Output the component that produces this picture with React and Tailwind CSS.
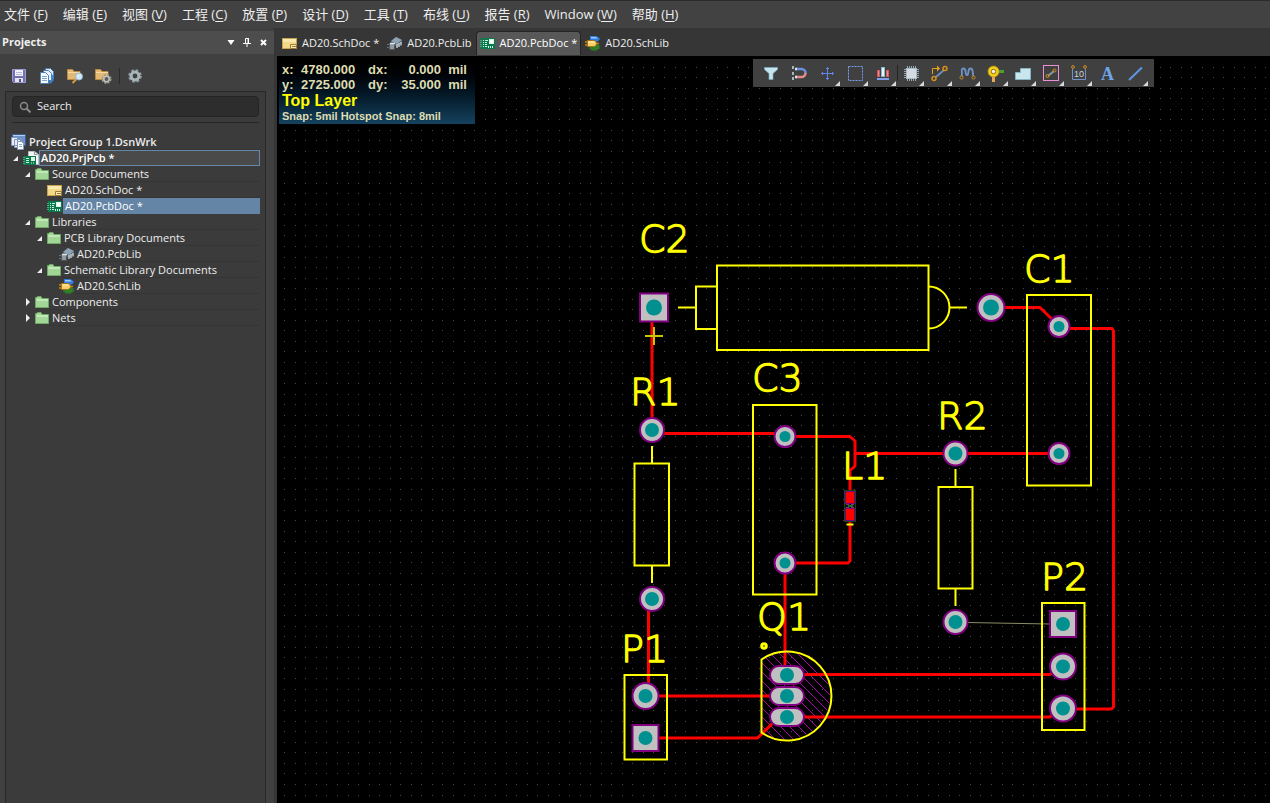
import React, { useState } from 'react';

const MENU = [
  { label: '文件', key: 'F' },
  { label: '编辑', key: 'E' },
  { label: '视图', key: 'V' },
  { label: '工程', key: 'C' },
  { label: '放置', key: 'P' },
  { label: '设计', key: 'D' },
  { label: '工具', key: 'T' },
  { label: '布线', key: 'U' },
  { label: '报告', key: 'R' },
  { label: 'Window', key: 'W' },
  { label: '帮助', key: 'H' }
];

/* ==========================================
   FILE TYPE ICONS
   ========================================== */
const SchDocIcon = () => (
  <svg width="16" height="13" viewBox="0 0 16 13" className="shrink-0">
    <rect x="0.500" y="1.500" width="14" height="10" fill="#f3d987" stroke="#c9a44e" />
    <path d="M1 2h13v3H1z" fill="#fae9ae" />
    <path d="M8.500 7.500h6v4h-6z" fill="#fbe9b0" stroke="#9a7a35" />
    <path d="M10 9.500h4" stroke="#9a7a35" />
  </svg>
);

const PcbDocIcon = () => (
  <svg width="16" height="13" viewBox="0 0 16 13" className="shrink-0" shapeRendering="crispEdges">
    <rect x="1" y="1" width="14" height="11" fill="#0a7a4c" />
    <path d="M0 3h2v1H0zM0 5h2v1H0zM0 7h2v1H0zM0 9h2v1H0z" fill="#3fae7e" />
    <path d="M3 3h1v1H3zM3 5h1v1H3zM3 7h1v1H3zM3 9h1v1H3zM5 3h3v1H5zM5 5h2v1H5zM5 7h2v1H5zM5 9h2v1H5z" fill="#c9f3de" />
    <path d="M9 2h5v5H9z" fill="#d9f5e6" />
    <path d="M10 3h3v3h-3z" fill="#fff" />
    <path d="M8 9h1v2H8zM10 9h1v2h-1zM12 9h1v2h-1z" fill="#d9f5e6" />
  </svg>
);

const PcbLibIcon = () => (
  <svg width="16" height="15" viewBox="0 0 16 15" className="shrink-0">
    <path d="M4 5L9 1l6 3v3l-5 4-6-3z" fill="#4f606e" />
    <path d="M4 5L9 1l6 3-5 4z" fill="#8fa3b3" />
    <path d="M10 12V8m2 3V7m2 2.500V6" stroke="#e5ebf0" strokeWidth="1.200" />
    <path d="M0 8.500h3M0 11.500h3" stroke="#69737b" />
    <rect x="2.500" y="7.500" width="5" height="6" fill="#9199a0" stroke="#4f565c" />
    <path d="M3 7.500h5" stroke="#dfe5ea" strokeWidth="1.500" />
  </svg>
);

const SchLibIcon = () => (
  <svg width="16" height="16" viewBox="0 0 16 16" className="shrink-0">
    <path d="M5 1h5c3 0 4 2 5 3-1 1-2 3-5 3H5z" fill="#2f7be0" />
    <path d="M6 2h5l2 1.500H6z" fill="#9ccbff" />
    <path d="M6 10h7v4H6zM7 14v2m2-2v2m2-2v2m2-5h2m-2 2h2M4 13h2" fill="#2f7d24" stroke="#2f8a20" />
    <path d="M0 7h3M0 10h3m8-1.500h3" stroke="#c48a13" strokeWidth="1.300" />
    <path d="M2.500 5.500h6c2 0 3 1.500 3 3s-1 3-3 3h-6z" fill="#f8cf6b" stroke="#a87410" />
    <path d="M3.500 6.500h5l1.500 1h-6.500z" fill="#fff1c2" />
  </svg>
);

const FolderIcon = () => (
  <svg width="14" height="12" viewBox="0 0 14 12" className="shrink-0">
    <path d="M0.500 11.500v-10h1l1-1h3.500l1 2h6.500v9z" fill="#a2d697" stroke="#6fa866" />
    <path d="M1.500 4h11.500" stroke="#c9efc0" strokeWidth="1.500" />
  </svg>
);

const ProjectIcon = () => (
  <svg width="16" height="15" viewBox="0 0 16 15" className="shrink-0">
    <path d="M5.500 0.500h6l4 3v10h-10z" fill="#f3f5f7" stroke="#b9c0c6" />
    <path d="M11.500 0.500v3h3" fill="none" stroke="#8c949b" />
    <rect x="1" y="5" width="12" height="9" fill="#0a7a4c" />
    <path d="M0 6.500h2M0 8.500h2M0 10.500h2M0 12.500h2" stroke="#3fae7e" />
    <path d="M3 7.500h3M3 9.500h3M3 11.500h3M8 12h1m1 0h1" stroke="#c9f3de" />
    <path d="M8 6h4v4H8z" fill="#d9f5e6" />
  </svg>
);

const GroupIcon = () => (
  <svg width="16" height="16" viewBox="0 0 16 16" className="shrink-0">
    <rect x="1.500" y="0.500" width="13" height="11" fill="#6f93c8" stroke="#3c5c92" />
    <path d="M2 1.500h12" stroke="#b6cff2" />
    <path d="M0.500 3.500h6v8h-6zM3.500 5.500h6v8h-6z" fill="#e7eef9" stroke="#8398bb" />
    <path d="M6.500 7.500h4l2 2v6h-6z" fill="#fff" stroke="#8398bb" />
    <path d="M8 10.500h3M8 12.500h3" stroke="#93a9cc" />
  </svg>
);

/* ==========================================
   PANEL ACTION ICONS
   ========================================== */
const SaveIcon = () => (
  <svg width="16" height="16" viewBox="0 0 16 16">
    <path d="M1.500 1.500h13v13h-12l-1-1z" fill="#7272b0" stroke="#9c9cd2" />
    <rect x="4" y="2" width="8" height="6" fill="#f2f2fa" />
    <path d="M5 4.500h6M5 6.500h6" stroke="#b9b9d2" />
    <rect x="4" y="10" width="8" height="4" fill="#e4e4f0" />
    <rect x="8" y="11" width="2" height="3" fill="#55558c" />
  </svg>
);

const CompileIcon = () => (
  <svg width="16" height="16" viewBox="0 0 16 16">
    <path d="M6.500 0.500h5l3 3v7h-8z" fill="#d9e9f7" stroke="#4d80b3" />
    <path d="M4.500 2.500h5l3 3v7h-8z" fill="#e6f1fb" stroke="#4d80b3" />
    <path d="M1.500 4.500h5l3 3v8h-8z" fill="#f6fbff" stroke="#4d80b3" />
    <path d="M3 8.500h5M3 10.500h5M3 12.500h5" stroke="#7ba6cf" />
    <path d="M13.500 7v5l-3 3" stroke="#3f86d6" strokeWidth="2" fill="none" />
  </svg>
);

const FolderSearchIcon = () => (
  <svg width="17" height="16" viewBox="0 0 17 16">
    <path d="M0.500 11.500v-10h5l1.500 2h6v8z" fill="#e3b873" stroke="#b98b47" />
    <path d="M1 4.500h12" stroke="#f6d9a4" />
    <path d="M9.500 11l-4 4" stroke="#d39a3c" strokeWidth="2" />
    <circle cx="12" cy="8.500" r="3.500" fill="#d4eaf6" stroke="#8fb4c9" />
  </svg>
);

const FolderGearIcon = () => (
  <svg width="17" height="16" viewBox="0 0 17 16">
    <path d="M0.500 11.500v-10h5l1.500 2h6v8z" fill="#e3b873" stroke="#b98b47" />
    <path d="M1 4.500h12" stroke="#f6d9a4" />
    <circle cx="11.500" cy="11" r="4" fill="none" stroke="#9a9a94" strokeWidth="2" strokeDasharray="2 1.150" />
    <circle cx="11.500" cy="11" r="2.700" fill="#5c5c58" stroke="#c3c3bb" strokeWidth="1.500" />
  </svg>
);

const GearIcon = () => (
  <svg width="16" height="16" viewBox="0 0 16 16">
    <circle cx="8" cy="8" r="5.600" fill="none" stroke="#8d9a9f" strokeWidth="2.400" strokeDasharray="2.600 1.800" />
    <circle cx="8" cy="8" r="3.900" fill="none" stroke="#a7b4b9" strokeWidth="3" />
  </svg>
);

/* ==========================================
   PLACEMENT TOOLBAR ICONS
   ========================================== */
const TOOLS = [
  {
    name: 'Filter',
    art: <path d="M1.500 2.500h13v2l-4.500 4v6H6v-6l-4.500-4z" fill="#c4e4ee" stroke="#7fa9bb" strokeWidth="0.700" />
  },
  {
    name: 'Snapping',
    art: (
      <>
        <path d="M1 2.500h2M1 8.500h2M1 13.500h2" stroke="#a3b8b8" strokeWidth="3" />
        <path d="M5 4h5.500a4 4 0 0 1 4 4" fill="none" stroke="#6c8fe0" strokeWidth="2.600" />
        <path d="M14.500 8a4 4 0 0 1-4 4H5" fill="none" stroke="#e58a8a" strokeWidth="2.600" />
        <path d="M4 4h2M4 12h2" stroke="#d9e4f2" strokeWidth="2.600" />
      </>
    )
  },
  {
    name: 'Move',
    menu: true,
    art: <path d="M8.500 2v13M2 8.500h13M7 3.500h3M7 13.500h3M3.500 7v3M13.500 7v3" stroke="#5f86e6" fill="none" />
  },
  {
    name: 'Select area',
    menu: true,
    art: <rect x="1.500" y="1.500" width="14" height="14" fill="none" stroke="#7a9cf0" strokeDasharray="2 1" />
  },
  {
    name: 'Align',
    menu: true,
    art: (
      <>
        <rect x="2.500" y="5.500" width="2" height="6" fill="#ec8d8d" stroke="#d65555" />
        <rect x="11.500" y="5.500" width="2" height="6" fill="#ec8d8d" stroke="#d65555" />
        <rect x="6.500" y="2.500" width="3" height="9" fill="#e4f5fb" stroke="#89b8cd" />
        <path d="M2 14h12" stroke="#7fa0ef" strokeWidth="2" />
      </>
    )
  },
  {
    name: 'Component',
    menu: true,
    divided: true,
    art: (
      <>
        <path d="M4.500 1v15M6.500 1v15M8.500 1v15M10.500 1v15M12.500 1v15M1 4.500h15M1 6.500h15M1 8.500h15M1 10.500h15M1 12.500h15" stroke="#8fa9b5" />
        <rect x="3.500" y="3.500" width="10" height="10" fill="#d5dbe0" stroke="#a9bcc6" />
      </>
    )
  },
  {
    name: 'Route',
    menu: true,
    art: (
      <>
        <path d="M5 12L13 5" stroke="#6f8bb4" strokeWidth="2" />
        <path d="M1.500 9V3.500H7" stroke="#e8a21a" fill="none" />
        <path d="M6 0.500l3 3-3 3z" fill="#e8a21a" />
        <circle cx="3" cy="13.500" r="2" fill="none" stroke="#d3901a" strokeWidth="1.500" />
        <circle cx="14" cy="3.500" r="2" fill="none" stroke="#d3901a" strokeWidth="1.500" />
      </>
    )
  },
  {
    name: 'Tune length',
    menu: true,
    art: (
      <>
        <path d="M2.500 12C4 8 1 3.500 4.500 3.500S5.500 10 8 10s0-6.500 3.500-6.500S13 8 14.500 12" fill="none" stroke="#6f93c9" strokeWidth="1.800" />
        <circle cx="2.500" cy="12.500" r="1.600" fill="#444" stroke="#c98a1e" />
        <circle cx="14.500" cy="12.500" r="1.600" fill="#444" stroke="#c98a1e" />
      </>
    )
  },
  {
    name: 'Via',
    menu: true,
    art: (
      <>
        <path d="M11 6.500h6" stroke="#4f9e35" strokeWidth="3" />
        <path d="M6.500 11v6" stroke="#eaa957" strokeWidth="3" />
        <circle cx="6.500" cy="6.500" r="5.500" fill="#f2cd1d" stroke="#b48c0a" strokeWidth="0.700" />
        <circle cx="6.500" cy="6.500" r="2.200" fill="#f8f5e6" stroke="#8f6e0b" />
      </>
    )
  },
  {
    name: 'Polygon',
    menu: true,
    art: <path d="M0.500 14.500v-7h5v-4h10v11z" fill="#c9e6ee" stroke="#84b3c5" />
  },
  {
    name: 'Keepout',
    menu: true,
    art: (
      <>
        <rect x="0.500" y="0.500" width="15" height="15" fill="none" stroke="#ee8ed8" />
        <path d="M5 11l6-5" stroke="#7f99a8" strokeWidth="2" />
        <circle cx="4.500" cy="11" r="1.500" fill="none" stroke="#d3901a" />
        <circle cx="11.500" cy="5.500" r="1.500" fill="none" stroke="#d3901a" />
      </>
    )
  },
  {
    name: 'Dimension',
    menu: true,
    art: (
      <>
        <path d="M1.500 4v10.500h13V4" fill="none" stroke="#6f93c9" />
        <circle cx="2" cy="2" r="1.400" fill="none" stroke="#d3901a" />
        <circle cx="14" cy="2" r="1.400" fill="none" stroke="#d3901a" />
        <text x="3" y="12" fill="#c8d2d6" fontSize="9" fontFamily="Liberation Sans, sans-serif">10</text>
      </>
    )
  },
  {
    name: 'String',
    art: (
      <text x="2" y="15" fill="#6fa5e8" fontSize="18" fontWeight="bold" fontFamily="Liberation Serif, serif">A</text>
    )
  },
  {
    name: 'Line',
    menu: true,
    art: <path d="M2 15L15 2.500" stroke="#5d97e3" strokeWidth="2" />
  }
];

/* ==========================================
   BOARD DATA
   ========================================== */
const TRACKS = [
  'M652 320V430',
  'M652 433.500H785',
  'M785 436.500H850L855 441V466L850 470.500V561L848 563H785',
  'M855 453.500H1059',
  'M785 563V675',
  'M991 307.500H1040L1059 326',
  'M1059 328.500H1112L1113.500 331V707L1111.500 709H1063',
  'M648.500 599V690',
  'M645 696H787',
  'M645 738H757.500L779 717',
  'M787 674.500H1050L1058 667',
  'M787 717H1050L1058 709'
];

const OUTLINES = [
  'M717 265.500H928.500V350H717Z',
  'M717 286.500H696V329H717M678 307.500H696',
  'M928.500 286.500A21 21 0 0 1 928.500 328.500M950 307.500H967',
  'M1027 295H1091V485.500H1027Z',
  'M753 405H816.500V594.500H753Z',
  'M634.500 463.500H669V565.500H634.500ZM652 446V463M652 566V583',
  'M938.500 487H972.500V588.500H938.500ZM955.500 469V487M955.500 588V606',
  'M624.500 675H667V759.500H624.500Z',
  'M1042 603H1084.500V730H1042Z',
  'M846.500 524.500H853.500'
];

const ROUND_PADS = [
  { x: 991, y: 307.5, r: 13.5, hole: 8 },
  { x: 1059, y: 326.5, r: 10.5, hole: 5.5 },
  { x: 1059, y: 453.5, r: 10.5, hole: 5.5 },
  { x: 785, y: 436.5, r: 10.5, hole: 5.5 },
  { x: 785, y: 563, r: 10.5, hole: 5.5 },
  { x: 652, y: 430, r: 12, hole: 7 },
  { x: 652, y: 599, r: 12, hole: 7 },
  { x: 955.5, y: 453.5, r: 12, hole: 7 },
  { x: 955.5, y: 622, r: 12, hole: 7 },
  { x: 645.5, y: 696, r: 13, hole: 7 },
  { x: 1063, y: 666.5, r: 13, hole: 7 },
  { x: 1063, y: 708.5, r: 13, hole: 7 }
];

const SQUARE_PADS = [
  { x: 654, y: 307.5, size: 28, hole: 8 },
  { x: 645.5, y: 738, size: 26, hole: 7 },
  { x: 1063, y: 624, size: 26, hole: 7 }
];

const DESIGNATORS = [
  { text: 'C2', x: 639, y: 252 },
  { text: 'C1', x: 1024, y: 282 },
  { text: 'C3', x: 752, y: 391 },
  { text: 'R1', x: 630, y: 405 },
  { text: 'R2', x: 937, y: 429 },
  { text: 'L1', x: 842, y: 479 },
  { text: 'Q1', x: 757, y: 630 },
  { text: 'P1', x: 621, y: 662 },
  { text: 'P2', x: 1041, y: 590 }
];

// 25 mil grid, one pixel per dot
const GRID_STEP = 10.55;
const gridPath = () => {
  let d = '';
  for (let x = 284.7; x < 2600; x += GRID_STEP) {
    for (let y = 67.1; y < 1500; y += GRID_STEP) {
      d += `M${Math.floor(x)} ${Math.floor(y)}h1v1h-1z`;
    }
  }
  return d;
};
const GRID = gridPath();

const Board = () => (
  <svg className="absolute inset-0 h-full w-full" role="img" aria-label="PCB layout">
    <defs>
      <pattern id="hatch" width="9" height="9" patternUnits="userSpaceOnUse">
        <path d="M-1 -1L10 10M-1 8L1 10M8 -1L10 1" stroke="#d800d8" strokeWidth="0.800" />
      </pattern>
    </defs>
    <g transform="translate(-277 -56)" fill="none">
      <path d={GRID} fill="#484848" shapeRendering="crispEdges" />

      <path d="M761.500 659.500A44 44 0 1 1 761.500 732.500Z" fill="url(#hatch)" />

      <g stroke="#ff0000" strokeWidth="3" strokeLinejoin="round">
        {TRACKS.map((d) => <path key={d} d={d} />)}
      </g>
      <path d="M967 622.500L1050 624" stroke="#8c8c66" />

      {/* Pads */}
      <g fill="#c0c0c0" stroke="#800080" strokeWidth="2">
        {ROUND_PADS.map((p) => <circle key={`${p.x}-${p.y}`} cx={p.x} cy={p.y} r={p.r} />)}
        {SQUARE_PADS.map((p) => (
          <rect key={`${p.x}-${p.y}`} x={p.x - p.size / 2} y={p.y - p.size / 2} width={p.size} height={p.size} />
        ))}
        {[675, 696, 717].map((y) => <rect key={y} x="770" y={y - 9} width="34" height="18" rx="9" />)}
      </g>
      <g fill="#009090">
        {[...ROUND_PADS, ...SQUARE_PADS].map((p) => <circle key={`${p.x}-${p.y}`} cx={p.x} cy={p.y} r={p.hole} />)}
        {[675, 696, 717].map((y) => <circle key={y} cx="787" cy={y} r="7" />)}
      </g>

      {/* L1 */}
      <rect x="844.500" y="490.500" width="11" height="31" fill="#111" stroke="#0f4a16" />
      <rect x="845.500" y="491.500" width="9" height="12" fill="#ff0000" stroke="#800080" />
      <rect x="845.500" y="508.500" width="9" height="12" fill="#ff0000" stroke="#800080" />
      <path d="M846 504.500h3m2 0h3M846 507.500h3m2 0h3" stroke="#803a70" />
      <path d="M848 506h5" stroke="#1e6e28" strokeWidth="2" />

      {/* Overlay */}
      <g stroke="#ffff00" strokeWidth="2">
        {OUTLINES.map((d) => <path key={d} d={d} />)}
        <path d="M761.500 659.500A44.500 44.500 0 1 1 761.500 732.500Z" />
        <circle cx="764" cy="646" r="2.300" strokeWidth="3" />
      </g>
      <path d="M645 336H663M654 327V345" stroke="#c8c800" strokeWidth="2" />
      <g
        fill="#ffff00"
        stroke="#ffff00"
        strokeWidth="1.300"
        strokeLinejoin="round"
        fontSize="38"
        fontWeight="200"
        fontFamily="DejaVu Sans Light, DejaVu Sans, sans-serif"
      >
        {DESIGNATORS.map((t) => <text key={t.text} x={t.x} y={t.y}>{t.text}</text>)}
      </g>
    </g>
  </svg>
);

/* ==========================================
   PROJECT TREE
   ========================================== */
const TREE = [
  { text: 'Project Group 1.DsnWrk', icon: GroupIcon, indent: 'pl-[11px]', bold: true },
  { text: 'AD20.PrjPcb *', icon: ProjectIcon, indent: 'pl-[11px]', open: true, bold: true, outlined: true },
  { text: 'Source Documents', icon: FolderIcon, indent: 'pl-[23px]', open: true },
  { text: 'AD20.SchDoc *', icon: SchDocIcon, indent: 'pl-[47px]' },
  { text: 'AD20.PcbDoc *', icon: PcbDocIcon, indent: 'pl-[47px]', selected: true },
  { text: 'Libraries', icon: FolderIcon, indent: 'pl-[23px]', open: true },
  { text: 'PCB Library Documents', icon: FolderIcon, indent: 'pl-[35px]', open: true },
  { text: 'AD20.PcbLib', icon: PcbLibIcon, indent: 'pl-[59px]' },
  { text: 'Schematic Library Documents', icon: FolderIcon, indent: 'pl-[35px]', open: true },
  { text: 'AD20.SchLib', icon: SchLibIcon, indent: 'pl-[59px]' },
  { text: 'Components', icon: FolderIcon, indent: 'pl-[23px]', open: false },
  { text: 'Nets', icon: FolderIcon, indent: 'pl-[23px]', open: false }
];

const Arrow = ({ open }) => (
  <svg width="12" height="8" viewBox="0 0 12 8" className="shrink-0">
    {open ? <path d="M7 2v5H2z" fill="#eee" /> : <path d="M3 0l4 4-4 4z" fill="#eee" />}
  </svg>
);

const TreeRow = ({ row }) => {
  const Icon = row.icon;
  let label = 'border-y border-t-transparent border-b-[#353535] pl-[2px]';
  if (row.icon === FolderIcon) label = 'border-y border-t-transparent border-b-[#353535] pl-[3px]';
  if (row.outlined) label = 'border border-[#6488a8] bg-[#4a4a4a] pl-px text-white';
  if (row.selected) label = 'bg-[#6485a5] pl-[2px] text-white';

  return (
    <li className={`flex h-4 items-center ${row.indent}`}>
      {row.open !== undefined && <Arrow open={row.open} />}
      <Icon />
      <button
        className={`flex h-4 min-w-0 flex-1 items-center whitespace-nowrap text-left ${row.bold ? 'font-semibold' : ''} ${label}`}
      >
        {row.text}
      </button>
    </li>
  );
};

const ProjectsPanel = () => {
  const [query, setQuery] = useState('');
  const actions = [
    { name: 'Save', icon: SaveIcon },
    { name: 'Compile', icon: CompileIcon },
    { name: 'Explore', icon: FolderSearchIcon },
    { name: 'Project options', icon: FolderGearIcon }
  ];

  return (
    <aside className="flex w-[274px] shrink-0 flex-col bg-[#404040]">
      <div className="mt-[3px] flex h-[23px] items-center bg-[#4d4d4d] pl-[2px] pr-[3px]">
        <h2 className="flex-1 font-bold">Projects</h2>
        <button aria-label="Panel menu" className="grid h-4 w-4 place-items-center">
          <svg width="8" height="5"><path d="M0.500 0h7L4 5z" fill="#fff" /></svg>
        </button>
        <button aria-label="Pin" className="grid h-4 w-4 place-items-center">
          <svg width="8" height="9" viewBox="0 0 8 9">
            <path d="M2.500 0.500h3v5h-3zM5 0v6M0 5.500h8M4 6v3" fill="none" stroke="#fff" />
          </svg>
        </button>
        <button aria-label="Close" className="grid h-4 w-4 place-items-center">
          <svg width="7" height="7"><path d="M1 1l5 5M6 1L1 6" stroke="#fff" strokeWidth="2" /></svg>
        </button>
      </div>

      <div className="flex h-[37px] items-center gap-3 pl-[11px] pt-[6px]">
        {actions.map(({ name, icon: Icon }) => (
          <button key={name} aria-label={name} className="w-4"><Icon /></button>
        ))}
        <div className="-ml-1 h-4 w-px bg-[#2a2a2a]" />
        <button aria-label="Settings" className="-ml-[5px] w-4"><GearIcon /></button>
      </div>

      <div className="ml-[5px] mr-2 flex-1 border-x border-t border-[#272727] bg-[#3b3b3b]">
        <div className="mx-[6px] border-b border-[#272727] pb-[5px] pt-1">
          <label className="flex h-[21px] items-center gap-[6px] rounded-sm border border-[#252525] bg-[#2d2d2d] pl-[6px]">
            <svg width="12" height="12" viewBox="0 0 12 12">
              <circle cx="5" cy="5" r="3.500" fill="none" stroke="#8a8a8a" strokeWidth="1.500" />
              <path d="M7.500 7.500l4 4" stroke="#8a8a8a" strokeWidth="2" />
            </svg>
            <input
              type="text"
              aria-label="Search"
              placeholder="Search"
              value={query}
              onChange={(e) => setQuery(e.target.value)}
              className="min-w-0 flex-1 bg-transparent outline-none placeholder:text-[#eee]"
            />
          </label>
        </div>
        <ul className="mr-[5px] mt-[11px] -ml-[6px]">
          {TREE.map((row) => <TreeRow key={row.text} row={row} />)}
        </ul>
      </div>
    </aside>
  );
};

/* ==========================================
   EDITOR
   ========================================== */
const TABS = [
  { text: 'AD20.SchDoc *', icon: SchDocIcon },
  { text: 'AD20.PcbLib', icon: PcbLibIcon },
  { text: 'AD20.PcbDoc *', icon: PcbDocIcon, active: true },
  { text: 'AD20.SchLib', icon: SchLibIcon }
];

const HeadsUp = () => (
  <div className="absolute left-[2px] top-0 h-[68px] w-[196px] whitespace-nowrap bg-gradient-to-b from-black to-[#15425f] pl-[3px] pt-[6px] font-['Liberation_Sans',sans-serif] font-bold text-[#dedcb0]">
    <div className="grid grid-cols-[19px_54px_40px_46px_26px] text-[13px] leading-[15px]">
      <span>x:</span>
      <span className="text-right">4780.000</span>
      <span className="pl-[13px]">dx:</span>
      <span className="text-right">0.000</span>
      <span className="text-right">mil</span>
      <span>y:</span>
      <span className="text-right">2725.000</span>
      <span className="pl-[13px]">dy:</span>
      <span className="text-right">35.000</span>
      <span className="text-right">mil</span>
    </div>
    <div className="text-[16px] leading-[17px] text-[#ffff00]">Top Layer</div>
    <div className="text-[11px] leading-[14px]">Snap: 5mil Hotspot Snap: 8mil</div>
  </div>
);

const PlacementBar = () => (
  <div className="absolute right-[116px] top-[3px] flex h-7 w-[401px] items-center bg-[#404040] pl-1">
    {TOOLS.map((tool) => (
      <button
        key={tool.name}
        aria-label={tool.name}
        className="relative grid h-7 w-7 place-items-center"
      >
        {tool.divided && <span className="absolute left-0 top-[6px] h-4 w-px bg-[#242424]" />}
        <svg width="17" height="17" viewBox="0 0 17 17" className="overflow-visible">{tool.art}</svg>
        {tool.menu && (
          <svg width="5" height="5" className="absolute bottom-[1px] right-[1px]">
            <path d="M5 0v5H0z" fill="#d8d8d8" />
          </svg>
        )}
      </button>
    ))}
  </div>
);

export default function App() {
  return (
    <div className="flex h-screen flex-col overflow-hidden bg-[#363636] font-['Open_Sans','Noto_Sans_CJK_SC',sans-serif] text-[11px] text-[#eeeeee]">
      <nav className="flex h-7 shrink-0 items-center gap-[15px] border-t border-[#2b2b2b] bg-[#424242] pl-1 text-[13px]">
        {MENU.map((item) => (
          <button key={item.key} className="whitespace-nowrap">
            {item.label} (<span className="underline underline-offset-2">{item.key}</span>)
          </button>
        ))}
      </nav>

      <div className="flex min-h-0 flex-1">
        <ProjectsPanel />

        <main className="ml-[3px] flex min-w-0 flex-1 flex-col">
          <div className="flex h-7 shrink-0 items-end pb-px pl-px">
            {TABS.map((tab) => {
              const Icon = tab.icon;
              return (
                <button
                  key={tab.text}
                  className={`flex h-6 items-center gap-1 whitespace-nowrap border px-[3px] ${tab.active ? 'rounded-t-sm border-b-0 border-[#242424] bg-[#585858] text-white' : 'border-transparent'}`}
                >
                  <Icon />
                  {tab.text}
                </button>
              );
            })}
          </div>

          <div className="relative min-h-0 flex-1 overflow-hidden bg-black">
            <Board />
            <HeadsUp />
            <PlacementBar />
          </div>
        </main>
      </div>
    </div>
  );
}
